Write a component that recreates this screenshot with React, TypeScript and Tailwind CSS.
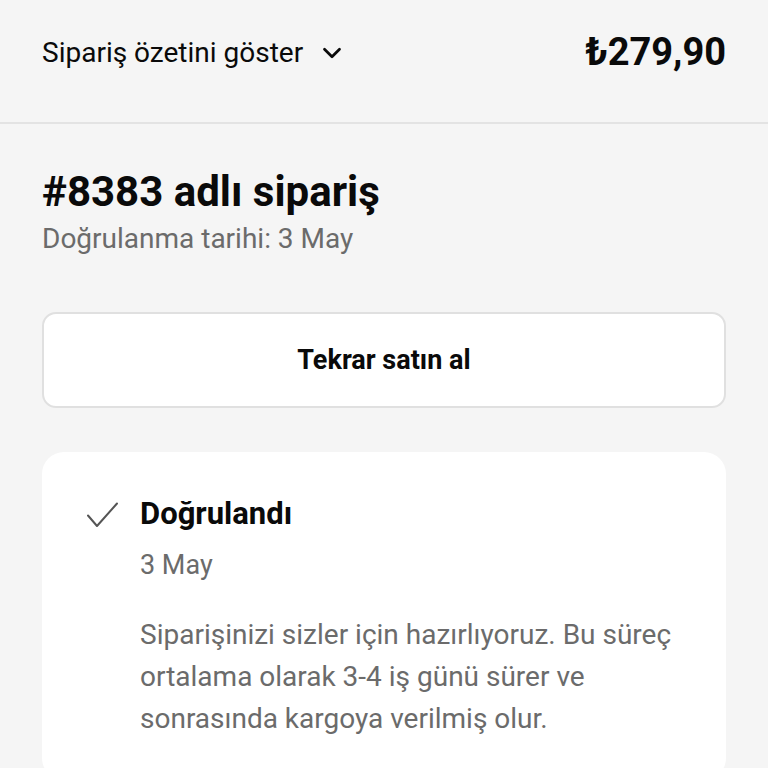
import { ChevronDown } from 'lucide-react';

export default function App() {
  return (
    <div className="min-h-[768px] bg-[#f5f5f5] font-['Roboto',sans-serif] text-[#0a0a0a]">
      {/* Summary bar */}
      <div className="flex h-[124px] items-start justify-between border-b-2 border-[#e3e3e3] px-[42px] pt-[36px]">
        <button className="flex items-center gap-[14px] text-[28px] leading-[33px]">
          Sipariş özetini göster
          <ChevronDown size={30} strokeWidth={2.2} />
        </button>
        <div className="-mt-[6px] text-[38px] font-bold leading-[45px]">₺279,90</div>
      </div>

      <div className="px-[42px]">
        {/* Order header */}
        <div className="pt-[44px]">
          <h1 className="text-[42px] font-bold leading-[48px]">#8383 adlı sipariş</h1>
          <p className="mt-[6px] text-[28px] leading-[33px] text-[#6b6b6b]">Doğrulanma tarihi: 3 May</p>
        </div>

        <button className="mt-[57px] flex h-[96px] w-full items-center justify-center rounded-[14px] border-2 border-[#e0e0e0] bg-white text-[27px] font-bold">
          Tekrar satın al
        </button>

        {/* Status card */}
        <div className="mt-[44px] rounded-[22px] bg-white pb-[40px] pl-[45px] pr-[44px] pt-[44px]">
          <div className="flex gap-[22px]">
            <svg width="31" height="26" viewBox="0 0 31 26" className="mt-[6px] shrink-0" fill="none">
              <polyline points="1,13.5 10,24 30,1.5" stroke="#555" strokeWidth="2" strokeLinecap="round" strokeLinejoin="round" />
            </svg>
            <div>
              <div className="text-[31px] font-bold leading-[36px]">Doğrulandı</div>
              <div className="mt-[17px] text-[27px] leading-[32px] text-[#6b6b6b]">3 May</div>
              <p className="mt-[33px] text-[28px] leading-[42px] text-[#6b6b6b]">
                Siparişinizi sizler için hazırlıyoruz. Bu süreç ortalama olarak 3-4 iş günü sürer ve sonrasında kargoya verilmiş olur.
              </p>
            </div>
          </div>
        </div>
      </div>
    </div>
  );
}
